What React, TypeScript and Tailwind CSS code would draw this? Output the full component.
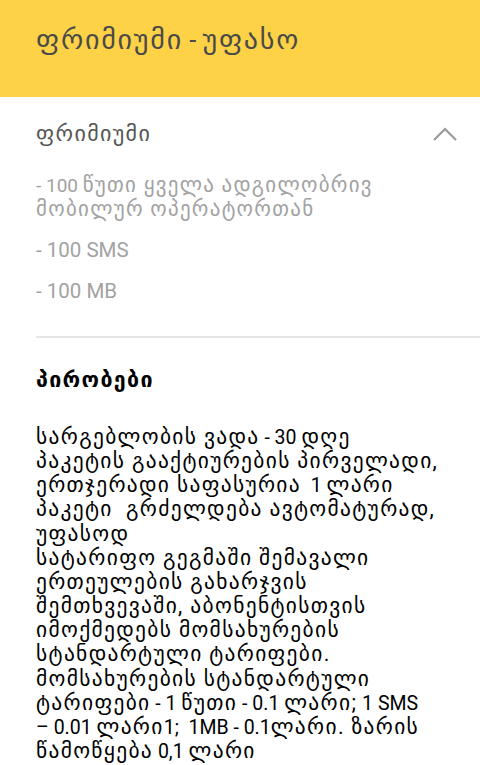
import React from "react";

const GEO = /([\u10A0-\u10FF]+(?:[ ,.;]*\s+[\u10A0-\u10FF]+)*[,.;]?)/;

function T({ text }: { text: string }) {
  const parts = text.split(GEO);
  return (
    <>
      {parts.map((p, i) =>
        i % 2 === 1 ? (
          <span key={i} className="text-[1.1em] tracking-[0.062em] leading-[10px]">
            {p}
          </span>
        ) : (
          <React.Fragment key={i}>{p}</React.Fragment>
        )
      )}
    </>
  );
}

const bodyLines = [
  "სარგებლობის ვადა - 30 დღე",
  "პაკეტის გააქტიურების პირველადი,",
  "ერთჯერადი საფასურია  1 ლარი",
  "პაკეტი  გრძელდება ავტომატურად,",
  "უფასოდ",
  "სატარიფო გეგმაში შემავალი",
  "ერთეულების გახარჯვის",
  "შემთხვევაში, აბონენტისთვის",
  "იმოქმედებს მომსახურების",
  "სტანდარტული ტარიფები.",
  "მომსახურების სტანდარტული",
  "ტარიფები - 1 წუთი - 0.1 ლარი; 1 SMS",
  "– 0.01 ლარი1;  1MB - 0.1ლარი. ზარის",
  "წამოწყება 0,1 ლარი",
];

export default function App() {
  return (
    <div
      className="w-[480px] h-[765px] overflow-hidden bg-white"
      style={{ fontFamily: 'Roboto, "DejaVu Sans", sans-serif' }}
    >
      <div className="h-[97px] bg-[#fdd246] pl-[36px] pt-[23px]">
        <div className="text-[25.5px] leading-[34px] text-[#4a4a4a] whitespace-pre">
          <T text="ფრიმიუმი - უფასო" />
        </div>
      </div>
      <div className="pl-[36px]">
        <div className="flex items-center justify-between h-[74px] pr-[22px]">
          <div className="text-[20px] leading-[24px] text-[#555555]">
            <T text="ფრიმიუმი" />
          </div>
          <svg width="26" height="16" viewBox="0 0 26 16" fill="none">
            <path d="M2 14 L13 3 L24 14" stroke="#9a9a9a" strokeWidth="2.2" />
          </svg>
        </div>
        <div className="text-[20.5px] leading-[24px] text-[#a2a2a2] pr-[36px]">
          <div className="pt-[3px] text-[19px]">
            <T text="- 100 წუთი ყველა ადგილობრივ მობილურ ოპერატორთან" />
          </div>
          <div className="mt-[16px]">- 100 SMS</div>
          <div className="mt-[17px]">- 100 MB</div>
        </div>
        <div className="mt-[33px] h-[2px] bg-[#e6e6e6]" />
        <div className="pr-[30px] text-black">
          <div className="mt-[31px] text-[19.5px] leading-[24px] font-bold">
            <T text="პირობები" />
          </div>
          <div className="mt-[33px] text-[19.5px] leading-[24.15px]">
            {bodyLines.map((l, i) => (
              <div key={i} className="whitespace-pre">
                <T text={l} />
              </div>
            ))}
          </div>
        </div>
      </div>
    </div>
  );
}
